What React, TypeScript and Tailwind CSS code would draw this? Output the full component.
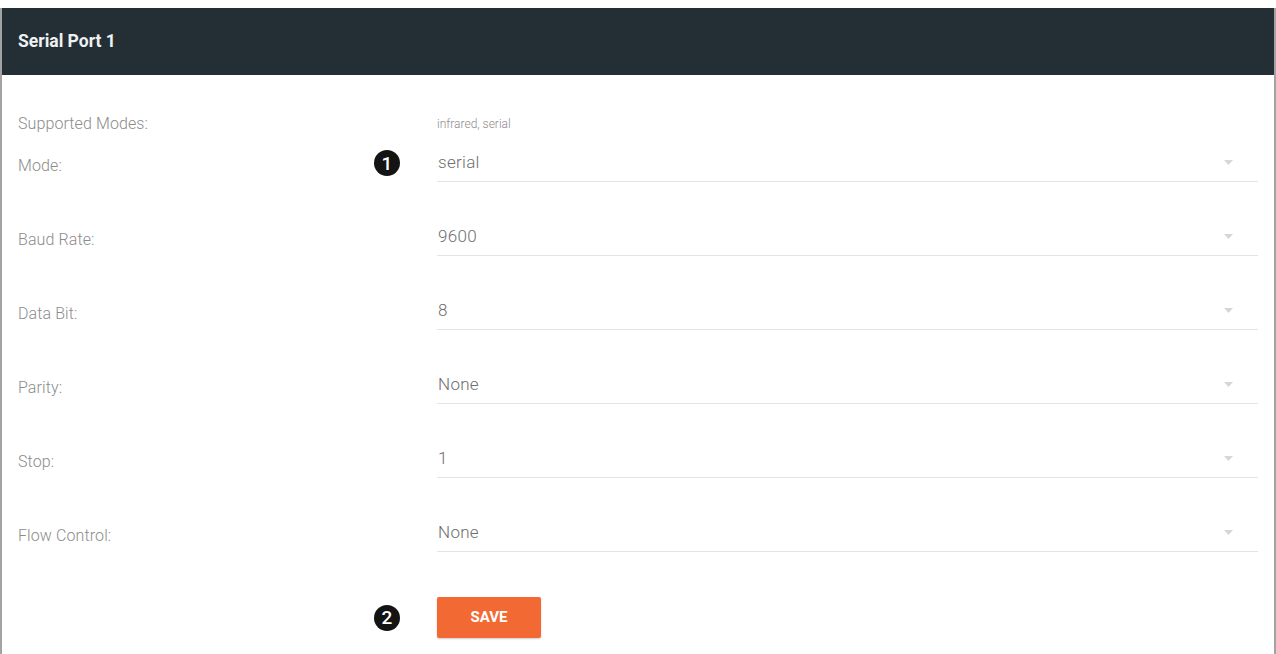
import React from "react";

type Row = { label: string; value: string; badge?: string };

const rows: Row[] = [
  { label: "Mode:", value: "serial", badge: "1" },
  { label: "Baud Rate:", value: "9600" },
  { label: "Data Bit:", value: "8" },
  { label: "Parity:", value: "None" },
  { label: "Stop:", value: "1" },
  { label: "Flow Control:", value: "None" },
];

function Badge({ n }: { n: string }) {
  return (
    <span className="absolute left-[356px] top-1/2 -translate-y-1/2 flex h-[26px] w-[26px] items-center justify-center rounded-full bg-[#141414] text-[19px] font-medium leading-none text-white">
      {n}
    </span>
  );
}

function Caret() {
  return (
    <svg width="9" height="5" viewBox="0 0 9 5" className="mr-[25px]">
      <path d="M0 0 L9 0 L4.5 5 Z" fill="#d6d6d6" />
    </svg>
  );
}

export default function App() {
  return (
    <div
      className="h-[654px] w-[1276px] overflow-hidden bg-white pt-[8px]"
      style={{ fontFamily: "Roboto, 'Liberation Sans', sans-serif" }}
    >
      <div className="flex h-full flex-col border-x-2 border-[#a3a3a3]">
        <div className="flex h-[67px] items-center bg-[#232e35] pl-[16px]">
          <span className="text-[17.5px] font-bold text-[#eef1f2]">Serial Port 1</span>
        </div>

        <div className="flex flex-col pl-[16px] pr-[16px] pt-[39px]">
          <div className="flex h-[20px] items-center">
            <span className="w-[419px] text-[16px] font-light tracking-[0.1px] text-[#8c8c8c]">Supported Modes:</span>
            <span className="text-[12px] font-light text-[#8c8c8c]">infrared, serial</span>
          </div>

          <div className="mt-[10px] flex flex-col gap-[36px]">
            {rows.map((r) => (
              <div key={r.label} className="relative flex h-[38px] items-center">
                <span className="w-[419px] pt-[5px] text-[16px] font-light tracking-[0.1px] text-[#8c8c8c]">{r.label}</span>
                {r.badge && <Badge n={r.badge} />}
                <div className="flex h-full flex-1 items-center justify-between border-b border-[#e4e4e4]">
                  <span className="pl-[1px] text-[17px] font-light tracking-[0.3px] text-[#6e6e6e]">{r.value}</span>
                  <Caret />
                </div>
              </div>
            ))}
          </div>

          <div className="relative mt-[45px] flex items-center">
            <div className="w-[419px]" />
            <span className="absolute left-[356px] top-1/2 -translate-y-1/2 flex h-[26px] w-[26px] items-center justify-center rounded-full bg-[#141414] text-[19px] font-medium leading-none text-white">
              2
            </span>
            <button className="flex h-[41px] w-[104px] items-center justify-center rounded-[2px] bg-[#f26934] text-[15px] font-bold text-white shadow-[0_1px_2px_rgba(0,0,0,0.2)]">
              SAVE
            </button>
          </div>
        </div>
      </div>
    </div>
  );
}
